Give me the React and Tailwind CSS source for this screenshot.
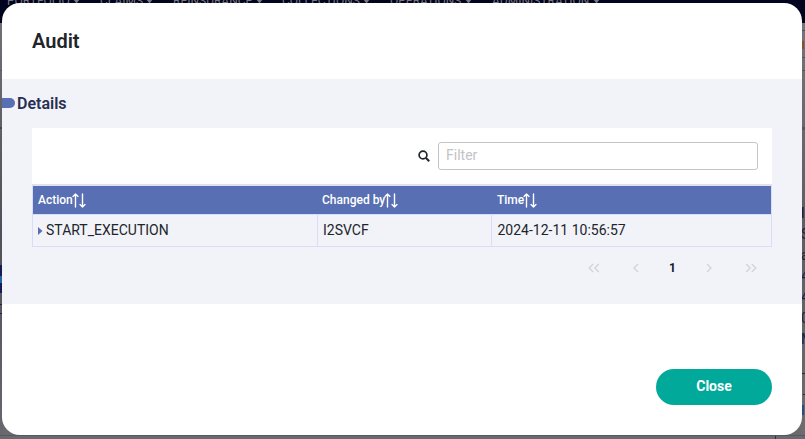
import React from "react";

const menus = [
  { label: "PORTFOLIO", cell: "w-[93px]", text: "w-[63px]" },
  { label: "CLAIMS", cell: "w-[73px]", text: "w-[43px]" },
  { label: "REINSURANCE", cell: "w-[109px]", text: "w-[80px]" },
  { label: "COLLECTIONS", cell: "w-[108px]", text: "w-[78px]" },
  { label: "OPERATIONS", cell: "w-[102px]", text: "w-[72px]" },
  { label: "ADMINISTRATION", cell: "w-[130px]", text: "w-[98px]" },
];

const edgeText = [
  { text: "l", tone: "text-[#11122d]" },
  { text: "S", tone: "text-[#222431]" },
  { text: "a", tone: "text-[#222431]" },
  { text: "4", tone: "text-[#10234a]" },
  { text: "4", tone: "text-[#10234a]" },
  { text: "0", tone: "text-[#222431]" },
  { text: "M", tone: "text-[#10234a]" },
];

function SortIcon() {
  return (
    <svg className="-ml-px h-[15px] w-[15px] shrink-0" viewBox="0 0 15 15" fill="none" stroke="currentColor" strokeWidth="1.4" strokeLinecap="round" strokeLinejoin="round">
      <path d="M4.5 14V1.2M2 3.4l2.5-2.3L7 3.4M11.5 1v12.8M9 11.6l2.5 2.3 2.5-2.3" />
    </svg>
  );
}

function Chevrons({ double, flip }) {
  return (
    <svg className={flip ? "h-[10px] w-[12px] -scale-x-100" : "h-[10px] w-[12px]"} viewBox="0 0 12 10" fill="none" stroke="#d3d4d9" strokeWidth="1.4">
      {double ? <path d="M5.2 1 1.2 5l4 4M10.8 1l-4 4 4 4" /> : <path d="M8 1 4 5l4 4" />}
    </svg>
  );
}

function Backdrop() {
  return (
    <div className="flex h-full flex-col bg-[#69696f]">
      <div className="flex h-[23px] shrink-0 overflow-hidden bg-[#02031f] pl-[7px] text-[12px] leading-[14px] text-[#777881]">
        {menus.map((m) => (
          <div key={m.label} className={`${m.cell} -mt-[6px] flex shrink-0`}>
            <span className={`${m.text} shrink-0 whitespace-nowrap`}>{m.label}</span>
            <svg className="mt-[5px] ml-[3px] h-[5px] w-[7px]" viewBox="0 0 7 5" fill="currentColor">
              <path d="M0 0h7L3.5 4.5z" />
            </svg>
          </div>
        ))}
      </div>
      <div className="flex flex-1 justify-between">
        <div className="w-[3px] bg-linear-to-b from-[#707075] via-[#4f5059] to-[#67676d]">
          <div className="mt-[47px] h-px bg-[#58585e]" />
          <div className="mt-[56px] h-[2px] bg-[#44454e]" />
          <div className="mt-[136px] h-[11px] bg-[#161b53]" />
          <div className="h-[7px] bg-[#23649a]" />
          <div className="h-[10px] bg-[#161b53]" />
          <div className="mt-[11px] h-px bg-[#1b1c56]" />
          <div className="mt-[8px] h-px bg-[#1b1c56]" />
        </div>
        <div className="flex w-[4px] flex-col overflow-hidden bg-linear-to-b from-[#74747a] via-[#5c5c65] to-[#6c6c71]">
          <div className="mt-[7px] h-px shrink-0 bg-[#4f5058]" />
          <div className="mt-[10px] ml-[1px] h-[8px] w-[2px] shrink-0 bg-[#80532e]" />
          <div className="mt-[8px] h-px shrink-0 bg-[#54555d]" />
          <div className="mt-[12px] h-px shrink-0 bg-[#54555d]" />
          <div className="mt-[56px] h-[3px] shrink-0 bg-[#55555f]" />
          <div className="mt-[73px] flex shrink-0 flex-col text-[14px] leading-[21px]">
            {edgeText.map((e, i) => (
              <span key={i} className={e.tone}>{e.text}</span>
            ))}
          </div>
          <div className="mt-[23px] h-px shrink-0 bg-[#282936]" />
          <div className="mt-[20px] ml-[2px] h-px shrink-0 bg-[#282936]" />
          <div className="mt-[10px] ml-[1px] h-[10px] w-[2px] shrink-0 bg-[#264f7e]" />
        </div>
      </div>
      <div className="flex h-[4px] shrink-0 justify-end border-t border-[#57575d] bg-[#69696f] pr-[29px]">
        <div className="w-px bg-[#303039]" />
      </div>
    </div>
  );
}

export default function App() {
  return (
    <div className="relative h-[439px] w-[805px] overflow-hidden font-['Roboto',sans-serif]">
      <Backdrop />
      <div className="absolute top-[3px] left-[2px] flex h-[432px] w-[800px] flex-col overflow-hidden rounded-[18px] bg-white">
        <header className="h-[76px] shrink-0 pt-[23px] pl-[30px]">
          <h1 className="text-[20px] leading-[30px] font-semibold text-[#212529]">Audit</h1>
        </header>
        <main className="h-[225px] shrink-0 bg-[#f2f3f9]">
          <div className="flex h-[49px] items-center gap-[2px]">
            <span className="mb-[2px] h-[10px] w-[13px] rounded-r-full bg-[#586fb3]" />
            <h2 className="text-[16px] leading-[24px] font-semibold text-[#272e51]">Details</h2>
          </div>
          <section className="mx-[30px]">
            <div className="flex h-[56px] items-center justify-end bg-white pr-[14px]">
              <svg className="mr-[8px] h-[12px] w-[12px]" viewBox="0 0 12 12" fill="none" stroke="#212529">
                <circle cx="5" cy="5" r="3.9" strokeWidth="1.7" />
                <path d="m8 8 3.2 3.2" strokeWidth="2" />
              </svg>
              <input
                placeholder="Filter"
                className="h-[28px] w-[320px] rounded-[3px] border border-[#c3c4c6] bg-white px-[7px] pb-[2px] text-[14px] placeholder:text-[#c2c3c6]"
              />
            </div>
            <div className="border border-t-2 border-[#d8ddf9] border-t-[#e0e1ec] text-[14px] text-[#212529]">
              <div className="flex h-[28px] items-center bg-[#586fb3] text-[12px] font-medium text-white">
                <div className="flex w-[284px] items-center pl-[5px]">Action<span className="-ml-px mt-px"><SortIcon /></span></div>
                <div className="flex w-[175px] items-center pl-[5px]">Changed by<span className="-ml-px mt-px"><SortIcon /></span></div>
                <div className="flex items-center pl-[5px]">Time<span className="-ml-px mt-px"><SortIcon /></span></div>
              </div>
              <div className="flex h-[32px] border-t border-[#d8ddf9] leading-[31px]">
                <div className="flex w-[285px] items-center border-r border-[#d8ddf9] pl-[5px]">
                  <svg className="mr-[3px] h-[8px] w-[5px]" viewBox="0 0 5 8" fill="#586fb3"><path d="M0 0v8l4.5-4z" /></svg>
                  START_EXECUTION
                </div>
                <div className="w-[174px] border-r border-[#d8ddf9] pl-[5px]">I2SVCF</div>
                <div className="pl-[5.5px]">2024-12-11 10:56:57</div>
              </div>
            </div>
            <nav className="flex h-[42px] items-center justify-end pr-[15px]">
              <Chevrons double />
              <span className="ml-[30px] flex"><Chevrons /></span>
              <span className="ml-[27px] text-[12px] font-bold text-[#111827]">1</span>
              <span className="ml-[27px] flex"><Chevrons flip /></span>
              <span className="ml-[30px] flex"><Chevrons double flip /></span>
            </nav>
          </section>
        </main>
        <footer className="flex flex-1 items-end justify-end pr-[30px] pb-[30px]">
          <button className="h-[36px] w-[116px] rounded-full bg-[#00a99a] pb-px text-[14px] font-bold text-white">Close</button>
        </footer>
      </div>
    </div>
  );
}
